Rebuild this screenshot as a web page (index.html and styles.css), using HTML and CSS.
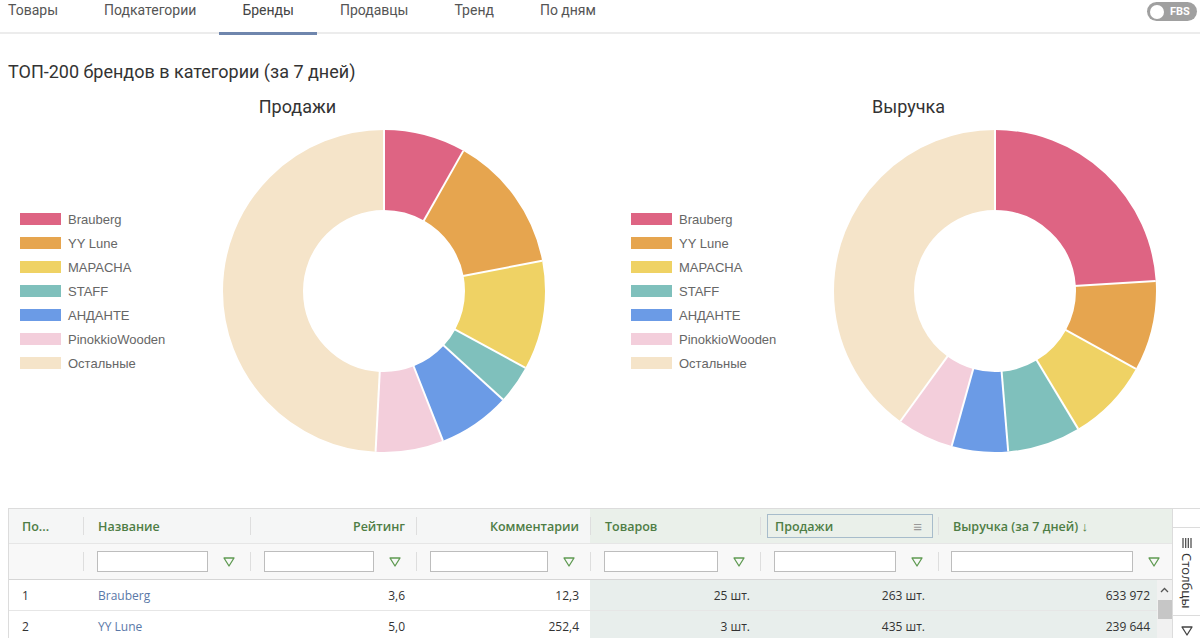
FILE: index.html
```html
<!DOCTYPE html>
<html lang="ru">
<head>
<meta charset="utf-8">
<title>Бренды</title>
<link rel="stylesheet" href="styles.css">
</head>
<body>
<nav class="tabs">
  <a class="tab first">Товары</a>
  <a class="tab">Подкатегории</a>
  <a class="tab active">Бренды</a>
  <a class="tab">Продавцы</a>
  <a class="tab">Тренд</a>
  <a class="tab">По дням</a>
  <div class="toggle"><span class="knob"></span><span class="toggle-label">FBS</span></div>
</nav>

<h1 class="title">ТОП-200 брендов в категории (за 7 дней)</h1>

<section class="charts">
  <div class="chart">
    <div class="chart-title">Продажи</div>
    <div class="chart-body">
      <ul class="legend">
        <li><span class="sw c1"></span>Brauberg</li>
        <li><span class="sw c2"></span>YY Lune</li>
        <li><span class="sw c3"></span>MAPACHA</li>
        <li><span class="sw c4"></span>STAFF</li>
        <li><span class="sw c5"></span>АНДАНТЕ</li>
        <li><span class="sw c6"></span>PinokkioWooden</li>
        <li><span class="sw c7"></span>Остальные</li>
      </ul>
      <svg class="donut" width="322" height="322" viewBox="0 0 322 322">
        <g transform="rotate(-90 161 161)" fill="none" stroke-width="80">
          <circle cx="161" cy="161" r="121" pathLength="360" stroke="#de6483" stroke-dasharray="29.5 400" stroke-dashoffset="0"/>
          <circle cx="161" cy="161" r="121" pathLength="360" stroke="#e6a54f" stroke-dasharray="49.7 400" stroke-dashoffset="-29.5"/>
          <circle cx="161" cy="161" r="121" pathLength="360" stroke="#efd264" stroke-dasharray="39.3 400" stroke-dashoffset="-79.2"/>
          <circle cx="161" cy="161" r="121" pathLength="360" stroke="#7fc0bc" stroke-dasharray="13.9 400" stroke-dashoffset="-118.5"/>
          <circle cx="161" cy="161" r="121" pathLength="360" stroke="#6b9be6" stroke-dasharray="26.1 400" stroke-dashoffset="-132.4"/>
          <circle cx="161" cy="161" r="121" pathLength="360" stroke="#f3cedb" stroke-dasharray="24.5 400" stroke-dashoffset="-158.5"/>
          <circle cx="161" cy="161" r="121" pathLength="360" stroke="#f5e4c9" stroke-dasharray="177 400" stroke-dashoffset="-183"/>
        </g>
        <g stroke="#fff" stroke-width="2">
          <line x1="161" y1="0" x2="161" y2="82"/>
          <line x1="161" y1="0" x2="161" y2="82" transform="rotate(29.5 161 161)"/>
          <line x1="161" y1="0" x2="161" y2="82" transform="rotate(79.2 161 161)"/>
          <line x1="161" y1="0" x2="161" y2="82" transform="rotate(118.5 161 161)"/>
          <line x1="161" y1="0" x2="161" y2="82" transform="rotate(132.4 161 161)"/>
          <line x1="161" y1="0" x2="161" y2="82" transform="rotate(158.5 161 161)"/>
          <line x1="161" y1="0" x2="161" y2="82" transform="rotate(183 161 161)"/>
        </g>
      </svg>
    </div>
  </div>

  <div class="chart">
    <div class="chart-title">Выручка</div>
    <div class="chart-body">
      <ul class="legend">
        <li><span class="sw c1"></span>Brauberg</li>
        <li><span class="sw c2"></span>YY Lune</li>
        <li><span class="sw c3"></span>MAPACHA</li>
        <li><span class="sw c4"></span>STAFF</li>
        <li><span class="sw c5"></span>АНДАНТЕ</li>
        <li><span class="sw c6"></span>PinokkioWooden</li>
        <li><span class="sw c7"></span>Остальные</li>
      </ul>
      <svg class="donut" width="322" height="322" viewBox="0 0 322 322">
        <g transform="rotate(-90 161 161)" fill="none" stroke-width="80">
          <circle cx="161" cy="161" r="121" pathLength="360" stroke="#de6483" stroke-dasharray="86.4 400" stroke-dashoffset="0"/>
          <circle cx="161" cy="161" r="121" pathLength="360" stroke="#e6a54f" stroke-dasharray="32.5 400" stroke-dashoffset="-86.4"/>
          <circle cx="161" cy="161" r="121" pathLength="360" stroke="#efd264" stroke-dasharray="30 400" stroke-dashoffset="-118.9"/>
          <circle cx="161" cy="161" r="121" pathLength="360" stroke="#7fc0bc" stroke-dasharray="26.4 400" stroke-dashoffset="-148.9"/>
          <circle cx="161" cy="161" r="121" pathLength="360" stroke="#6b9be6" stroke-dasharray="20.3 400" stroke-dashoffset="-175.3"/>
          <circle cx="161" cy="161" r="121" pathLength="360" stroke="#f3cedb" stroke-dasharray="20.4 400" stroke-dashoffset="-195.6"/>
          <circle cx="161" cy="161" r="121" pathLength="360" stroke="#f5e4c9" stroke-dasharray="144 400" stroke-dashoffset="-216"/>
        </g>
        <g stroke="#fff" stroke-width="2">
          <line x1="161" y1="0" x2="161" y2="82"/>
          <line x1="161" y1="0" x2="161" y2="82" transform="rotate(86.4 161 161)"/>
          <line x1="161" y1="0" x2="161" y2="82" transform="rotate(118.9 161 161)"/>
          <line x1="161" y1="0" x2="161" y2="82" transform="rotate(148.9 161 161)"/>
          <line x1="161" y1="0" x2="161" y2="82" transform="rotate(175.3 161 161)"/>
          <line x1="161" y1="0" x2="161" y2="82" transform="rotate(195.6 161 161)"/>
          <line x1="161" y1="0" x2="161" y2="82" transform="rotate(216 161 161)"/>
        </g>
      </svg>
    </div>
  </div>
</section>

<section class="table-wrap">
  <div class="grid">
    <div class="row head">
      <div class="cell">По...</div>
      <div class="cell sep">Название</div>
      <div class="cell sep right">Рейтинг</div>
      <div class="cell sep right">Комментарии</div>
      <div class="cell sep hl">Товаров</div>
      <div class="cell sep hl focus"><span class="focus-box"><span>Продажи</span><span class="menu">&#8801;</span></span></div>
      <div class="cell sep hl">Выручка (за 7 дней)&nbsp; <span class="arrow">&#8595;</span></div>
    </div>
    <div class="row filters">
      <div class="cell"></div>
      <div class="cell sep"><span class="input"></span><svg class="funnel" width="12" height="10" viewBox="0 0 12 10"><path d="M1 1 H11 L6 9 Z" fill="none" stroke="#5f9a52" stroke-width="1.3" stroke-linejoin="round"/></svg></div>
      <div class="cell sep"><span class="input"></span><svg class="funnel" width="12" height="10" viewBox="0 0 12 10"><path d="M1 1 H11 L6 9 Z" fill="none" stroke="#5f9a52" stroke-width="1.3" stroke-linejoin="round"/></svg></div>
      <div class="cell sep"><span class="input"></span><svg class="funnel" width="12" height="10" viewBox="0 0 12 10"><path d="M1 1 H11 L6 9 Z" fill="none" stroke="#5f9a52" stroke-width="1.3" stroke-linejoin="round"/></svg></div>
      <div class="cell sep"><span class="input"></span><svg class="funnel" width="12" height="10" viewBox="0 0 12 10"><path d="M1 1 H11 L6 9 Z" fill="none" stroke="#5f9a52" stroke-width="1.3" stroke-linejoin="round"/></svg></div>
      <div class="cell sep"><span class="input"></span><svg class="funnel" width="12" height="10" viewBox="0 0 12 10"><path d="M1 1 H11 L6 9 Z" fill="none" stroke="#5f9a52" stroke-width="1.3" stroke-linejoin="round"/></svg></div>
      <div class="cell sep last"><span class="input"></span><svg class="funnel" width="12" height="10" viewBox="0 0 12 10"><path d="M1 1 H11 L6 9 Z" fill="none" stroke="#5f9a52" stroke-width="1.3" stroke-linejoin="round"/></svg></div>
    </div>
    <div class="body">
      <div class="row data">
        <div class="cell">1</div>
        <div class="cell"><a class="link">Brauberg</a></div>
        <div class="cell right">3,6</div>
        <div class="cell right">12,3</div>
        <div class="cell right hl c-tov">25 шт.</div>
        <div class="cell right hl c-sales">263 шт.</div>
        <div class="cell right hl c-rev">633 972</div>
      </div>
      <div class="row data">
        <div class="cell">2</div>
        <div class="cell"><a class="link">YY Lune</a></div>
        <div class="cell right">5,0</div>
        <div class="cell right">252,4</div>
        <div class="cell right hl c-tov">3 шт.</div>
        <div class="cell right hl c-sales">435 шт.</div>
        <div class="cell right hl c-rev">239 644</div>
      </div>
      <div class="scrollbar">
        <span class="sb-up"><svg width="9" height="6" viewBox="0 0 9 6"><path d="M1 5 L4.5 1.5 L8 5" fill="none" stroke="#555" stroke-width="1.3"/></svg></span>
        <span class="sb-thumb"></span>
      </div>
    </div>
  </div>
  <aside class="side">
    <div class="side-top"></div>
    <div class="side-tab">
      <svg width="10" height="10" viewBox="0 0 10 10"><path d="M1 0 V10 M3.7 0 V10 M6.3 0 V10 M9 0 V10" stroke="#444" stroke-width="1.2"/></svg>
      <span class="side-label">Столбцы</span>
    </div>
    <div class="side-tab2">
      <svg width="12" height="10" viewBox="0 0 12 10"><path d="M1 1 H11 L6 9 Z" fill="none" stroke="#444" stroke-width="1.3" stroke-linejoin="round"/></svg>
    </div>
  </aside>
</section>
</body>
</html>
```

FILE: styles.css
```css
html, body {
  margin: 0;
  padding: 0;
}
body {
  width: 1200px;
  height: 638px;
  overflow: hidden;
  background: #fff;
  font-family: Roboto, "Noto Sans", sans-serif;
  color: #333;
}

/* Tabs */
.tabs {
  display: flex;
  align-items: flex-start;
  height: 32px;
  border-bottom: 2px solid #ececec;
}
.tab {
  display: block;
  box-sizing: border-box;
  padding: 0 23px;
  line-height: 20px;
  font-size: 14px;
  color: #555;
  border-bottom: 3px solid transparent;
  margin-bottom: -2px;
  height: 35px;
}
.tab.first {
  padding-left: 8px;
}
.tab.active {
  border-bottom-color: #6f86ad;
  color: #444;
}
.toggle {
  margin-left: auto;
  margin-right: 3px;
  margin-top: 2px;
  width: 50px;
  height: 19px;
  border-radius: 10px;
  background: #a0a0a0;
  display: flex;
  align-items: center;
  box-sizing: border-box;
  padding-left: 3px;
}
.knob {
  width: 14px;
  height: 14px;
  border-radius: 50%;
  background: #fff;
}
.toggle-label {
  margin-left: 6px;
  font-family: Roboto, sans-serif;
  font-weight: 700;
  font-size: 11px;
  color: #fff;
}

/* Title */
.title {
  margin: 26px 0 0 0;
  padding-left: 8px;
  font-size: 18px;
  line-height: 24px;
  font-weight: 400;
  color: #333;
}

/* Charts */
.charts {
  display: grid;
  grid-template-columns: 595px 595px;
  column-gap: 16px;
  margin-top: 11px;
}
.chart-title {
  text-align: center;
  font-size: 18px;
  line-height: 24px;
  color: #333;
}
.chart-body {
  display: flex;
  align-items: center;
  margin-top: 11px;
}
.legend {
  list-style: none;
  margin: 0;
  padding: 0 0 0 20px;
  width: 223px;
  flex: none;
  box-sizing: border-box;
  font-family: "Liberation Sans", Arial, sans-serif;
  font-size: 13px;
  color: #666;
}
.legend li {
  display: flex;
  align-items: center;
  height: 24px;
}
.sw {
  width: 41px;
  height: 12px;
  margin-right: 7px;
}
.c1 { background: #de6483; }
.c2 { background: #e6a54f; }
.c3 { background: #efd264; }
.c4 { background: #7fc0bc; }
.c5 { background: #6b9be6; }
.c6 { background: #f3cedb; }
.c7 { background: #f5e4c9; }
.donut {
  display: block;
  flex: none;
}

/* Table */
.table-wrap {
  display: flex;
  margin: 56px 0 0 8px;
  font-family: "Open Sans", "Noto Sans", sans-serif;
  font-size: 12px;
}
.grid {
  width: 1164px;
  border-top: 1px solid #dcdcdc;
  border-left: 1px solid #dcdcdc;
  box-sizing: border-box;
}
.row {
  display: grid;
  grid-template-columns: 74px 167px 166px 174px 170px 178px 234px;
}
.cell {
  position: relative;
  display: flex;
  align-items: center;
  box-sizing: border-box;
  padding: 0 11px 0 15px;
  white-space: nowrap;
}
.row .cell:first-child {
  padding-left: 13px;
}
.right {
  justify-content: flex-end;
}
.head {
  height: 34px;
  background: #f5f6f6;
  border-bottom: 1px solid #e6e6e6;
  font-weight: 600;
  font-size: 12.5px;
  color: #4e7d45;
}
.head .hl {
  background: #eaf0ea;
}
.sep::before {
  content: "";
  position: absolute;
  left: 0;
  top: 8px;
  bottom: 8px;
  width: 1px;
  background: #dedede;
}
.head .focus {
  padding: 0 5px 0 7px;
}
.focus-box {
  flex: 1;
  height: 24px;
  box-sizing: border-box;
  border: 1px solid #a7bccb;
  display: flex;
  align-items: center;
  justify-content: space-between;
  padding: 0 10px 0 7px;
}
.menu {
  color: #999;
  font-weight: 400;
  font-size: 15px;
}
.arrow {
  font-weight: 400;
  font-size: 13px;
}
.filters {
  height: 35px;
  background: #f8f8f8;
  border-bottom: 1px solid #d6d6d6;
}
.filters .cell {
  padding: 0 15px 0 14px;
}
.filters .cell.last {
  padding: 0 12px 0 13px;
}
.input {
  flex: 1;
  height: 21px;
  box-sizing: border-box;
  background: #fff;
  border: 1px solid #bdbdbd;
}
.funnel {
  margin-left: 15px;
  flex: none;
}
.body {
  position: relative;
}
.data {
  height: 31px;
  box-sizing: border-box;
  border-bottom: 1px solid #e6e6e6;
  color: #333;
}
.data .hl {
  background: #e8eeec;
}
.data .c-tov { padding-right: 10px; }
.data .c-sales { padding-right: 13px; }
.data .c-rev { padding-right: 22px; }
.link {
  color: #5a78a8;
}
.scrollbar {
  position: absolute;
  right: 0;
  top: 0;
  width: 15px;
  height: 62px;
  background: #f1f1f1;
}
.sb-up {
  display: flex;
  justify-content: center;
  align-items: center;
  height: 20px;
}
.sb-thumb {
  display: block;
  margin-left: 1px;
  width: 14px;
  height: 19px;
  background: #c6c6c6;
}

/* side panel */
.side {
  width: 28px;
  border-top: 1px solid #dcdcdc;
  border-left: 1px solid #dcdcdc;
  box-sizing: border-box;
  display: flex;
  flex-direction: column;
}
.side-top {
  height: 18px;
  border-bottom: 1px solid #dcdcdc;
}
.side-tab {
  height: 88px;
  border-bottom: 1px solid #dcdcdc;
  display: flex;
  flex-direction: column;
  align-items: center;
  padding-top: 10px;
  box-sizing: border-box;
}
.side-label {
  writing-mode: vertical-rl;
  margin-top: 5px;
  font-size: 13px;
  color: #333;
}
.side-tab2 {
  display: flex;
  justify-content: center;
  padding-top: 10px;
}
```
